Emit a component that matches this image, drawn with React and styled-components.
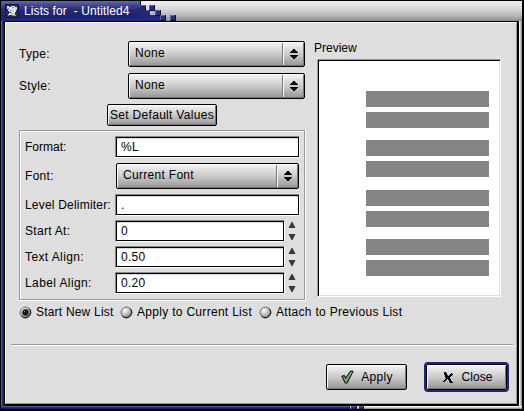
import React from "react";
import styled, { createGlobalStyle, css } from "styled-components";

const Global = createGlobalStyle`
  * { box-sizing: border-box; }
  body { margin: 0; background: #000; }
`;

const metal = "linear-gradient(#f6f6f6 0, #e2e2e2 22%, #cbcbcb 50%, #ababab 80%, #929292 100%)";

const Window = styled.div`
  width: 524px;
  height: 411px;
  padding: 1px 2px 2px 1px;
  background: #000;
  display: flex;
  flex-direction: column;
  overflow: hidden;
  color: #000;
  font: 12px/16px "Liberation Sans", Arial, sans-serif;
  white-space: pre;
`;
const TitleBar = styled.header`
  height: 20px;
  flex: none;
  display: flex;
  background: linear-gradient(#f0eeee 0, #e6e4e4 20%, #cfcfcf 50%, #b4b4b4 75%, #8c8c8c 100%);
`;
const TitleTab = styled.div`
  width: 139px;
  height: 20px;
  display: flex;
  align-items: center;
  padding-left: 4px;
  gap: 5px;
  color: #fff;
  background: linear-gradient(#6468b0 0, #4a4f98 15%, #252a73 45%, #1c2370 75%, #232b80 100%);
`;
const Middle = styled.div`
  flex: 1;
  min-height: 0;
  display: flex;
`;
const LeftEdge = styled.div`
  width: 4px;
  background: linear-gradient(90deg, #555a9c 0 1px, #252b75 1px 2px, #1a1f62 2px 3px, #000 3px);
`;
const RightEdge = styled.div`
  width: 5px;
  background: linear-gradient(90deg, #000 0 2px, #f4f4f4 2px 3px, #c8c8c8 3px 4px, #8c8c8c 4px);
`;
const BottomEdge = styled.footer`
  height: 3px;
  flex: none;
  display: flex;
  background: linear-gradient(#f2f2f2 0 1px, #cccccc 1px 2px, #999 2px);
`;
const BottomBlue = styled.div`
  width: ${(p) => p.$w}px;
  margin-right: ${(p) => p.$gap || 0}px;
  border-right: 1px solid #080b38;
  background: linear-gradient(#555a9c 0 1px, #252b75 1px 2px, #1a1f62 2px);
`;
const Body = styled.main`
  flex: 1;
  border: solid;
  border-width: 1px;
  border-color: #fff #999 #999 #fff;
  box-shadow: 0 -1px #000, 0 2px #000;
  margin: 1px 0 2px;
  background: #dedede;
  display: flex;
  flex-direction: column;
`;
const Columns = styled.div`
  display: flex;
  padding: 18px 0 0 13px;
  gap: 8px;
`;
const FormColumn = styled.div`
  width: 287px;
  display: flex;
  flex-direction: column;
`;
const PreviewColumn = styled.section`
  width: 187px;
  margin-top: -1px;
`;
const Row = styled.div`
  display: flex;
  align-items: center;
  height: ${(p) => p.$h || 26}px;
  margin-bottom: ${(p) => p.$gap || 0}px;
`;
const Text = styled.span`
  letter-spacing: ${(p) => p.$ls ?? 0.3}px;
`;
const Label = styled(Text)`
  width: ${(p) => p.$w}px;
  flex: none;
`;
const raised = css`
  border: 1px solid #000;
  border-radius: 2px;
  background: ${metal};
  box-shadow: inset 1px 1px #fafafa, inset -1px -1px #777;
  color: #000;
  font: inherit;
  padding: 0;
`;
const SelectBox = styled.button`
  ${raised}
  width: ${(p) => p.$w}px;
  height: 26px;
  display: flex;
  align-items: center;
  text-align: left;
`;
const SelectText = styled(Text)`
  flex: 1;
  padding: 0 0 3px 6px;
`;
const SelectArrow = styled.span`
  width: 22px;
  height: 22px;
  border-left: 1px solid #777;
  box-shadow: inset 1px 0 #f8f8f8;
  display: flex;
  align-items: center;
  justify-content: center;
`;
const Button = styled.button`
  ${raised}
  width: ${(p) => p.$w}px;
  height: ${(p) => p.$h || 26}px;
  display: flex;
  align-items: center;
  justify-content: center;
  gap: ${(p) => p.$gap || 0}px;
  padding-left: ${(p) => p.$shift || 0}px;
  ${(p) => p.$focus && css`outline: 2px solid #1d2675;`}
`;
const DefaultRow = styled.div`
  display: flex;
  padding: 5px 0 4px 88px;
`;
const Group = styled.section`
  height: 170px;
  border: 1px solid #999;
  box-shadow: inset 1px 1px #fff, 0 1px #fff, 1px 0 #fff, 1px 1px #fff;
  width: 286px;
  padding: 5px 0 0 5px;
  margin-bottom: 4px;
`;
const Field = styled.div`
  width: ${(p) => p.$w || 185}px;
  height: 22px;
  border: 1px solid;
  border-color: #888 #fff #fff #888;
  box-shadow: inset 0 0 0 1px #000, inset 0 2px #d4d4d4;
  background: #fff;
  padding: 1px 0 0 5px;
  line-height: 18px;
`;
const Spin = styled.svg`
  width: 8px;
  height: 18px;
  margin-left: 3px;
`;
const RadioRow = styled.div`
  display: flex;
  height: 16px;
  align-items: center;
`;
const Radio = styled.label`
  display: flex;
  align-items: center;
  gap: 4px;
  width: ${(p) => p.$w}px;
  flex: none;
`;
const PreviewBox = styled.div`
  width: 184px;
  height: 238px;
  margin: 3px 0 0 3px;
  border: 1px solid;
  border-color: #999 #fff #fff #999;
  box-shadow: inset 1px 1px #000, inset -1px -1px #dedede;
  background: #fff;
  padding: 31px 11px 0 48px;
`;
const Bar = styled.div`
  height: 16px;
  background: #848484;
  margin-bottom: ${(p) => p.$gap}px;
`;
const Rule = styled.div`
  height: 2px;
  margin: 24px 3px 0 5px;
  background: linear-gradient(#999 0 1px, #fff 1px);
`;
const Actions = styled.div`
  display: flex;
  justify-content: flex-end;
  gap: 19px;
  padding: 18px 9px 0 0;
`;
const Icon = styled.svg`
  flex: none;
  display: block;
`;

const Arrows = () => (
  <Icon width="8" height="11" shapeRendering="crispEdges">
    <path d="M3 0h2v1h1v1h1v1h1v1H0V3h1V2h1V1h1zM0 6h8v1H7v1H6v1H5v1H3V9H2V8H1V7H0z" fill="#000" />
  </Icon>
);

const Select = ({ w, ls, children }) => (
  <SelectBox $w={w}>
    <SelectText $ls={ls}>{children}</SelectText>
    <SelectArrow><Arrows /></SelectArrow>
  </SelectBox>
);

const Stepper = () => (
  <Spin viewBox="0 0 8 18">
    <path d="M3.500 0h1L7.500 6H.500zM.500 12h7l-3 6h-1z" fill="#383838" />
  </Spin>
);

const RadioDot = ({ on }) => (
  <Icon width="13" height="13" viewBox="0 0 13 13">
    <defs>
      <radialGradient id="ball" cx=".35" cy=".3" r=".75">
        <stop offset="0" stopColor="#fff" />
        <stop offset=".5" stopColor="#c4c4c4" />
        <stop offset="1" stopColor="#777" />
      </radialGradient>
    </defs>
    <circle cx="6.500" cy="6.500" r="5.400" fill="url(#ball)" stroke="#6c6c6c" />
    <path d="M10.300 2.700A5.400 5.400 0 0 1 2.700 10.300" fill="none" stroke="#111" />
    {on && <circle cx="6.500" cy="6.500" r="3.200" fill="#161616" stroke="#555" strokeWidth=".6" />}
    {on && <path d="M5 5h1v1H5z" fill="#999" />}
  </Icon>
);

const AppIcon = () => (
  <Icon width="14" height="14" shapeRendering="crispEdges">
    <path d="M0 0h14v14H0z" fill="#10143e" />
    <path d="M1 1h12v12H1z" fill="#262b5c" />
    <path d="M2 2h2v1h2V2h4v1h2v3h-1v2h-1v3H8V9H6V8H4V7H3V5H2z" fill="#d7dce5" />
    <path d="M3 4h1v2H3zM7 3h2v1H7zM5 6h2v1H5z" fill="#8790a8" />
    <path d="M5 3h1v3H5zM9 6h1v3H9zM4 9h2v2H4z" fill="#fff" />
    <path d="M6 9h2v2H6z" fill="#d9bb45" />
    <path d="M3 10h1v2H3zM7 11h4v1H7z" fill="#8f98b8" />
  </Icon>
);

const Tile = ({ x, y }) => (
  <g>
    <path d={`M${x} ${y}h6v6h-6z`} fill="#0b0e40" />
    <path d={`M${x} ${y}h5v5h-5z`} fill="#5c61a6" />
    <path d={`M${x + 1} ${y + 1}h4v4h-4z`} fill="#272d7c" />
  </g>
);

const TitleTiles = () => (
  <Icon width="40" height="20" shapeRendering="crispEdges">
    <path d="M0 4h6v5h4v5h10v6H0z" fill="#222974" />
    <path d="M0 4h6v1H0zM6 9h4v1H6z" fill="#5c61a6" />
    <path d="M0 0h1v4H0zM5 5h1v5H5z" fill="#0b0e40" />
    <path d="M11 10h4v4h-4z" fill="#b4b4bc" />
    <Tile x={9} y={4} />
    <Tile x={15} y={9} />
    <Tile x={20} y={14} />
    <Tile x={30} y={14} />
  </Icon>
);

const Check = () => (
  <Icon width="13" height="14" viewBox="0 0 13 14">
    <path d="M1 6.500 3 5.500 5 8 9.500 1 12 1.500 6 13 4.300 13z" fill="#7d9f68" stroke="#10180c" strokeWidth="1.100" />
    <path d="M5 10 10.500 2" stroke="#b0c79b" strokeWidth=".7" />
  </Icon>
);

const Cross = () => (
  <Icon width="10" height="11" viewBox="0 0 10 11" shapeRendering="crispEdges">
    <path d="M1 0h2v1h1v2h1v1h1V3h1V2h1V1h1v1h1v1H9v1H8v1H7v2h1v2h1v1h1v1H7v-1H6V8H5V7H4v1H3v1H2v1H0V9h1V8h1V7h1V6H2V3H1z" fill="#000" />
  </Icon>
);

export default function App() {
  return (
    <>
      <Global />
      <Window>
        <TitleBar>
          <TitleTab>
            <AppIcon />
            <Text $ls={0.1}>{"Lists for  - Untitled4"}</Text>
          </TitleTab>
          <TitleTiles />
        </TitleBar>
        <Middle>
          <LeftEdge />
          <Body>
            <Columns>
              <FormColumn>
                <Row $gap={6}>
                  <Label $w={109}>Type:</Label>
                  <Select w={177}>None</Select>
                </Row>
                <Row>
                  <Label $w={109}>Style:</Label>
                  <Select w={177}>None</Select>
                </Row>
                <DefaultRow>
                  <Button $w={110} $h={22}><Text $ls={0.3}>Set Default Values</Text></Button>
                </DefaultRow>
                <Group>
                  <Row $h={22} $gap={5}>
                    <Label $w={90} $ls={0}>Format:</Label>
                    <Field><Text>%L</Text></Field>
                  </Row>
                  <Row $gap={5}>
                    <Label $w={91}>Font:</Label>
                    <Select w={183}>Current Font</Select>
                  </Row>
                  <Row $h={22} $gap={4}>
                    <Label $w={90} $ls={0.2}>Level Delimiter:</Label>
                    <Field><Text>.</Text></Field>
                  </Row>
                  <Row $h={22} $gap={4}>
                    <Label $w={90}>Start At:</Label>
                    <Field $w={170}><Text>0</Text></Field>
                    <Stepper />
                  </Row>
                  <Row $h={22} $gap={4}>
                    <Label $w={90} $ls={0.4}>Text Align:</Label>
                    <Field $w={170}><Text>0.50</Text></Field>
                    <Stepper />
                  </Row>
                  <Row $h={22}>
                    <Label $w={90} $ls={0.4}>Label Align:</Label>
                    <Field $w={170}><Text>0.20</Text></Field>
                    <Stepper />
                  </Row>
                </Group>
                <RadioRow>
                  <Radio $w={101}><RadioDot on /><Text $ls={0.2}>Start New List</Text></Radio>
                  <Radio $w={139}><RadioDot /><Text>Apply to Current List</Text></Radio>
                  <Radio><RadioDot /><Text>Attach to Previous List</Text></Radio>
                </RadioRow>
              </FormColumn>
              <PreviewColumn>
                <Text $ls={0}>Preview</Text>
                <PreviewBox>
                  {[5, 12, 5, 13, 5, 12, 5, 0].map((gap, i) => <Bar key={i} $gap={gap} />)}
                </PreviewBox>
              </PreviewColumn>
            </Columns>
            <Rule />
            <Actions>
              <Button $w={81} $gap={7} $shift={1}><Check /><Text>Apply</Text></Button>
              <Button $w={81} $gap={8} $shift={3} $focus><Cross /><Text $ls={0.1}>Close</Text></Button>
            </Actions>
          </Body>
          <RightEdge />
        </Middle>
        <BottomEdge>
          <BottomBlue $w={349} $gap={1} />
          <BottomBlue $w={6} $gap={2} />
          <BottomBlue $w={5} />
        </BottomEdge>
      </Window>
    </>
  );
}
